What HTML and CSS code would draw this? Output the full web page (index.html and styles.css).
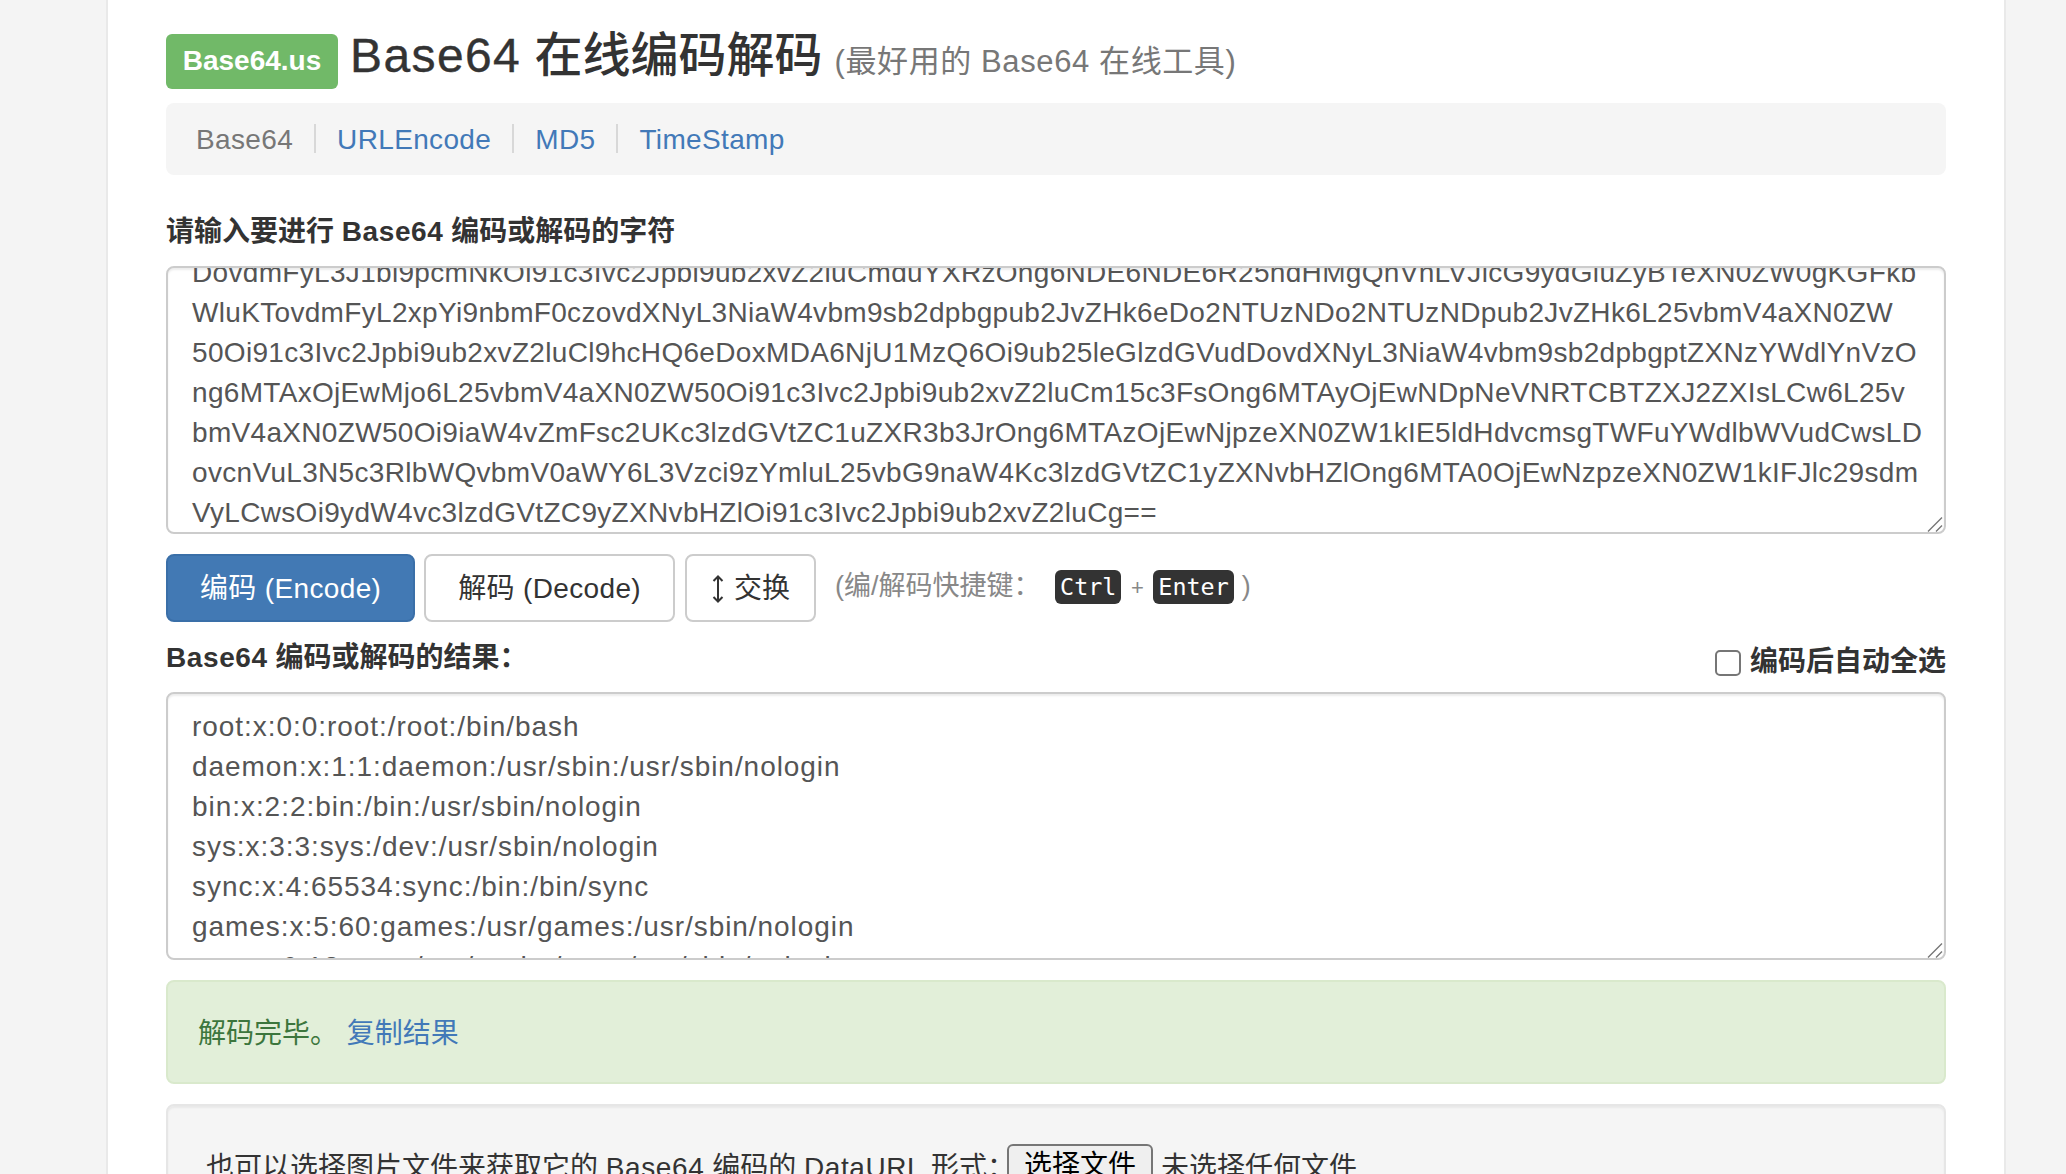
FILE: index.html
```html
<!DOCTYPE html>
<html lang="zh-CN">
<head>
<meta charset="utf-8">
<title>Base64 在线编码解码</title>
<link rel="stylesheet" href="styles.css">
</head>
<body>
<main class="page">
  <h1 class="title">
    <span class="logo">Base64.us</span>
    <span class="title-main"><span class="title-latin">Base64</span> 在线编码解码</span>
    <small class="title-sub">(最好用的 Base64 在线工具)</small>
  </h1>
  <nav class="crumbs">
    <span class="crumb current">Base64</span>
    <a class="crumb" href="#">URLEncode</a>
    <a class="crumb" href="#">MD5</a>
    <a class="crumb" href="#">TimeStamp</a>
  </nav>
  <label class="field-label input-label" for="src">请输入要进行 <span class="latin">Base64</span> 编码或解码的字符</label>
  <div class="box-wrap">
    <textarea id="src" class="box box-src" wrap="off" spellcheck="false">DovdmFyL3J1bi9pcmNkOi91c3Ivc2Jpbi9ub2xvZ2luCmduYXRzOng6NDE6NDE6R25hdHMgQnVnLVJlcG9ydGluZyBTeXN0ZW0gKGFkb
WluKTovdmFyL2xpYi9nbmF0czovdXNyL3NiaW4vbm9sb2dpbgpub2JvZHk6eDo2NTUzNDo2NTUzNDpub2JvZHk6L25vbmV4aXN0ZW
50Oi91c3Ivc2Jpbi9ub2xvZ2luCl9hcHQ6eDoxMDA6NjU1MzQ6Oi9ub25leGlzdGVudDovdXNyL3NiaW4vbm9sb2dpbgptZXNzYWdlYnVzO
ng6MTAxOjEwMjo6L25vbmV4aXN0ZW50Oi91c3Ivc2Jpbi9ub2xvZ2luCm15c3FsOng6MTAyOjEwNDpNeVNRTCBTZXJ2ZXIsLCw6L25v
bmV4aXN0ZW50Oi9iaW4vZmFsc2UKc3lzdGVtZC1uZXR3b3JrOng6MTAzOjEwNjpzeXN0ZW1kIE5ldHdvcmsgTWFuYWdlbWVudCwsLD
ovcnVuL3N5c3RlbWQvbmV0aWY6L3Vzci9zYmluL25vbG9naW4Kc3lzdGVtZC1yZXNvbHZlOng6MTA0OjEwNzpzeXN0ZW1kIFJlc29sdm
VyLCwsOi9ydW4vc3lzdGVtZC9yZXNvbHZlOi91c3Ivc2Jpbi9ub2xvZ2luCg==</textarea>
    <svg class="grip" width="16" height="16" viewBox="0 0 16 16" aria-hidden="true"><path d="M1 15.5 15 1.5M9 15.5 15 9.5"/></svg>
  </div>
  <div class="actions">
    <button class="btn btn-primary" type="button">编码 (Encode)</button>
    <button class="btn btn-text" type="button">解码 (Decode)</button>
    <button class="btn btn-swap" type="button">
      <svg class="swap-icon" width="14" height="28" viewBox="0 0 14 28" aria-hidden="true"><path d="M7 1.5V26.5M2.5 6 7 1.5 11.5 6M2.5 22 7 26.5 11.5 22"/></svg>
      <span>交换</span>
    </button>
    <span class="hint">(编/解码快捷键： <kbd class="key key-first">Ctrl</kbd> <span class="plus">+</span> <kbd class="key">Enter</kbd><span class="hint-end">)</span></span>
  </div>
  <div class="result-head">
    <label class="field-label" for="out"><span class="latin">Base64</span> 编码或解码的结果：</label>
    <label class="auto-select"><input class="check" type="checkbox"><span>编码后自动全选</span></label>
  </div>
  <div class="box-wrap">
    <textarea id="out" class="box box-out" wrap="off" spellcheck="false">root:x:0:0:root:/root:/bin/bash
daemon:x:1:1:daemon:/usr/sbin:/usr/sbin/nologin
bin:x:2:2:bin:/bin:/usr/sbin/nologin
sys:x:3:3:sys:/dev:/usr/sbin/nologin
sync:x:4:65534:sync:/bin:/bin/sync
games:x:5:60:games:/usr/games:/usr/sbin/nologin
man:x:6:12:man:/var/cache/man:/usr/sbin/nologin</textarea>
    <svg class="grip" width="16" height="16" viewBox="0 0 16 16" aria-hidden="true"><path d="M1 15.5 15 1.5M9 15.5 15 9.5"/></svg>
  </div>
  <div class="alert">解码完毕。 <a class="copy" href="#">复制结果</a></div>
  <div class="well">
    <span>也可以选择图片文件来获取它的 <span class="latin">Base64</span> 编码的 <span class="latin">DataURL</span> 形式：</span>
    <button class="file-btn" type="button">选择文件</button>
    <span>未选择任何文件</span>
  </div>
</main>
<script src="app.js"></script>
</body>
</html>
```
FILE: styles.css
```css
* { box-sizing: border-box; }
html, body { height: 100%; }
body {
  margin: 0;
  overflow: hidden;
  background: #f4f4f4;
  color: #333;
  font: 28px/40px "Liberation Sans", "Noto Sans CJK SC", sans-serif;
}
a { color: #4279b8; text-decoration: none; }
.latin { letter-spacing: .6px; }
.page {
  width: 1900px;
  height: 1174px;
  margin-left: 106px;
  padding: 0 58px;
  overflow: hidden;
  background: #fff;
  border-left: 2px solid #e9e9e9;
  border-right: 2px solid #e9e9e9;
}
.title {
  display: flex;
  align-items: flex-start;
  height: 103px;
  margin: 0;
  padding-top: 34px;
  font-weight: 500;
}
.logo {
  width: 172px;
  height: 55px;
  border-radius: 6px;
  background: #71b968;
  color: #fff;
  font-size: 28px;
  font-weight: 700;
  line-height: 54px;
  text-align: center;
}
.title-main {
  margin: -6px 0 0 12px;
  font-size: 48px;
  line-height: 55px;
}
.title-latin { letter-spacing: 1.4px; -webkit-text-stroke: .4px #333; }
.title-sub {
  margin-left: 12px;
  color: #777;
  font-size: 31px;
  font-weight: 400;
  line-height: 55px;
  letter-spacing: .6px;
}
.crumbs {
  display: flex;
  align-items: center;
  height: 72px;
  padding: 2px 30px 0;
  border-radius: 8px;
  background: #f5f5f5;
  letter-spacing: .35px;
}
.crumb { position: relative; padding: 0 22px; line-height: 40px; }
.crumb:first-child { padding-left: 0; }
.crumb.current { color: #777; }
.crumb + .crumb::before {
  content: "";
  position: absolute;
  left: -1px;
  top: 4px;
  width: 2px;
  height: 29px;
  background: #d8d8d8;
}
.field-label { font-weight: 700; }
.input-label { display: block; margin-top: 37px; margin-bottom: 14px; }
.box-wrap { position: relative; }
.box {
  display: block;
  width: 100%;
  height: 268px;
  padding: 12px 24px;
  border: 2px solid #ccc;
  border-radius: 8px;
  outline: none;
  overflow: hidden;
  resize: none;
  white-space: pre;
  background: #fff;
  color: #555;
  font: inherit;
  box-shadow: inset 0 2px 2px rgba(0, 0, 0, .075);
}
.box-src { letter-spacing: .32px; }
.box-out { padding-top: 13px; letter-spacing: .95px; }
.grip { position: absolute; right: 3px; bottom: 2px; }
.grip path { fill: none; stroke: #777; stroke-width: 1.4; }
.actions { display: flex; align-items: flex-start; margin-top: 20px; }
.btn {
  height: 68px;
  margin-right: 10px;
  padding: 2px 32px 0;
  border: 2px solid #ccc;
  border-radius: 8px;
  background: #fff;
  color: #333;
  font: inherit;
}
.btn-primary, .btn-text { letter-spacing: .35px; }
.btn-primary { margin-right: 9px; background: #4279b4; border-color: #3a6fa8; color: #fff; }
.btn-swap { display: flex; align-items: center; gap: 9px; margin-right: 0; padding: 2px 24px 0; }
.swap-icon { flex: none; }
.swap-icon path { fill: none; stroke: #333; stroke-width: 2; }
.hint { margin: 12px 0 0 19px; color: #888; font-size: 27px; white-space: nowrap; }
.key {
  display: inline-block;
  height: 34px;
  padding: 0 5px;
  border-radius: 6px;
  background: #333;
  color: #fff;
  font: 23.4px/34px "DejaVu Sans Mono", monospace;
  vertical-align: 0;
}
.key-first { margin-left: 7px; }
.hint-end { margin-left: 8px; }
.plus { margin: 0 2px; font-size: 22px; }
.result-head {
  display: flex;
  justify-content: space-between;
  align-items: flex-start;
  height: 70px;
  padding-top: 16px;
}
.auto-select { display: flex; align-items: center; gap: 9px; padding-top: 4px; font-weight: 700; }
.check {
  appearance: none;
  width: 26px;
  height: 26px;
  margin: 2px 0 0;
  border: 2px solid #767676;
  border-radius: 5px;
  background: #fff;
}
.alert {
  height: 104px;
  margin-top: 20px;
  padding: 32px 30px 0;
  border: 2px solid #d9e9cc;
  border-radius: 8px;
  background: #e2efd9;
  color: #3c763d;
}
.copy { margin-left: 1px; }
.well {
  display: flex;
  align-items: flex-start;
  gap: 8px;
  height: 200px;
  margin-top: 20px;
  padding: 38px;
  border: 2px solid #e6e6e6;
  border-radius: 8px;
  background: #f5f5f5;
  box-shadow: inset 0 2px 2px rgba(0, 0, 0, .05);
  white-space: nowrap;
}
.well > span { padding-top: 4px; }
.file-btn {
  height: 44px;
  margin-left: -16px;
  padding: 0 15px;
  border: 2px solid #767676;
  border-radius: 6px;
  background: #efefef;
  color: #000;
  font: inherit;
}
```
FILE: app.js
```js
document.getElementById('src').scrollTop = 27;
```
